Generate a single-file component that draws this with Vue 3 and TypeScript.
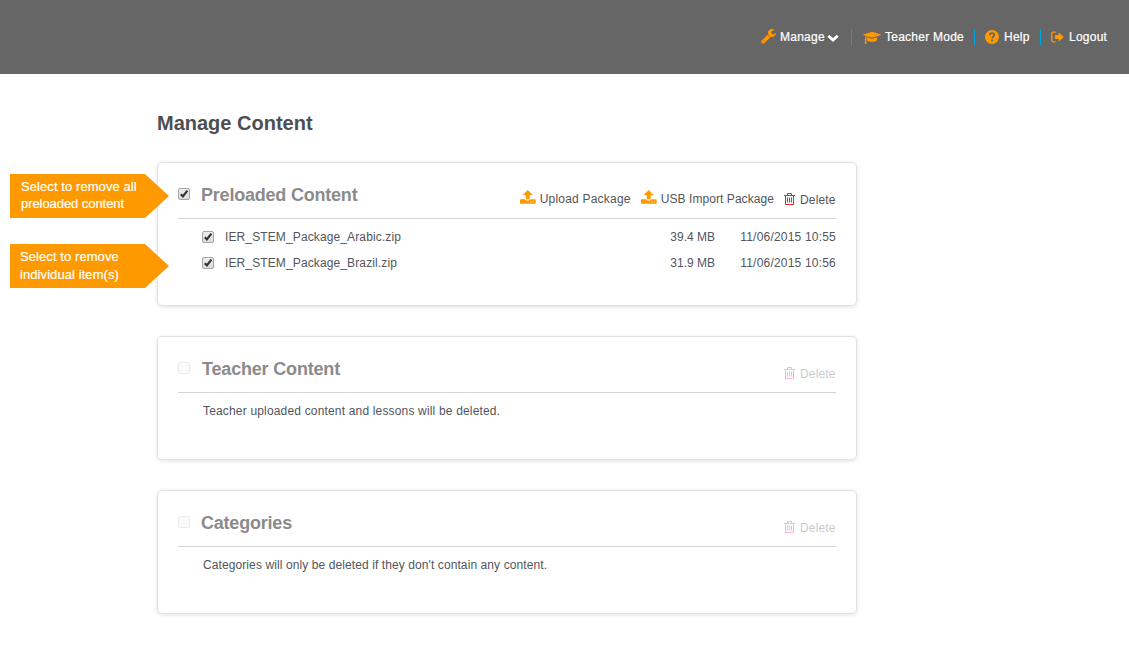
<script setup lang="ts">
interface PackageFile {
  name: string
  size: string
  date: string
}

const files: PackageFile[] = [
  { name: 'IER_STEM_Package_Arabic.zip', size: '39.4 MB', date: '11/06/2015 10:55' },
  { name: 'IER_STEM_Package_Brazil.zip', size: '31.9 MB', date: '11/06/2015 10:56' },
]

const sections = [
  { key: 'teacher-content', title: 'Teacher Content', text: 'Teacher uploaded content and lessons will be deleted.' },
  { key: 'categories', title: 'Categories', text: "Categories will only be deleted if they don't contain any content." },
]
</script>

<template>
  <div class="page">
    <header class="topbar">
      <nav class="nav">
        <a class="item manage">
          <svg class="icon wrench" viewBox="0 0 1664 1664"><path d="M384 1344q0-26-19-45t-45-19-45 19-19 45 19 45 45 19 45-19 19-45zm644-420l-682 682q-37 37-90 37-52 0-91-37L59 1498q-38-36-38-90 0-53 38-91l681-681q39 98 114.500 173.500T1028 924zm634-435q0 39-23 106-47 134-164.500 217.500T1216 896q-185 0-316.500-131.500T768 448t131.500-316.500T1216 0q58 0 121.500 16.500T1445 63q16 11 16 28t-16 28l-293 169v224l193 107q5-3 79-48.500t135.500-81T1630 454q15 0 23.500 10t8.500 25z" /></svg>
          <span>Manage</span>
          <svg class="icon chevron" viewBox="0 0 12 8"><path d="M1.300 1.700L6 6l4.700-4.300" /></svg>
        </a>
        <a class="item teacher">
          <svg class="icon cap" viewBox="0 0 2304 1600"><path d="M1774 836l18 316q4 69-82 128t-235 93.500-323 34.500-323-34.500-235-93.500-82-128l18-316 574 181q22 7 48 7t48-7zm530-324q0 23-22 31l-1120 352q-4 1-10 1t-10-1L510 690q-43 34-71 111.500T405 980q63 36 63 109 0 69-58 107l58 433q2 14-8 25-9 11-24 11H244q-15 0-24-11-10-11-8-25l58-433q-58-38-58-107 0-73 65-111 11-207 98-330L42 543q-22-8-22-31t22-31L1162 129q4-1 10-1t10 1l1100 352q22 8 22 31z" /></svg>
          <span>Teacher Mode</span>
        </a>
        <a class="item help">
          <svg class="icon question" viewBox="0 0 14 14"><circle cx="7" cy="7" r="7" /><path class="mark" d="M4.700 5.300C4.800 3.800 5.700 3.100 7.100 3.100c1.300 0 2.200.8 2.200 1.900 0 1.700-2.200 1.700-2.200 3.300" /><rect class="dot" x="6.100" y="9.400" width="2" height="1.900" /></svg>
          <span>Help</span>
        </a>
        <a class="item logout">
          <svg class="icon exit" viewBox="0 0 13 12"><path class="frame" d="M4.700 1.100H2.500Q.8 1.100.8 2.800v6.400q0 1.700 1.700 1.700h2.200" /><path d="M4 4h3.700V1.200L12.800 6l-5.100 4.800V8H4z" /></svg>
          <span>Logout</span>
        </a>
      </nav>
    </header>

    <main class="content">
      <h1>Manage Content</h1>

      <section class="card preloaded">
        <div class="card-head">
          <span class="check on"><svg viewBox="0 0 12 12"><path d="M2.800 6.300L4.900 8.400 9.400 2.600" /></svg></span>
          <h2>Preloaded Content</h2>
          <div class="actions">
            <a class="action upload"><svg class="up" viewBox="0 0 16 14"><path d="M7.700 0l5 5H9.700v4.200H5.800V5H2.700zM.5 9.300h4.300q.5 1.400 2.900 1.400t3-1.400H15q.7 0 .7.700v3q0 .7-.7.700H.7q-.7 0-.7-.7v-3q0-.7.500-.7z" /><path class="hole" d="M10.500 11.700h1M13 11.700h1" /></svg><span>Upload Package</span></a>
            <a class="action usb"><svg class="up" viewBox="0 0 16 14"><path d="M7.700 0l5 5H9.700v4.200H5.800V5H2.700zM.5 9.300h4.300q.5 1.400 2.900 1.400t3-1.400H15q.7 0 .7.700v3q0 .7-.7.700H.7q-.7 0-.7-.7v-3q0-.7.500-.7z" /><path class="hole" d="M10.500 11.700h1M13 11.700h1" /></svg><span>USB Import Package</span></a>
            <a class="action delete"><svg class="trash" viewBox="0 0 11 12"><path d="M0 2.500h11M3.500 2.500V.5h4v2M1.500 2.500v9h8v-9M3.500 4.500v5M5.500 4.500v5M7.500 4.500v5" /></svg><span>Delete</span></a>
          </div>
        </div>
        <ul class="files">
          <li v-for="file in files" :key="file.name">
            <span class="check on"><svg viewBox="0 0 12 12"><path d="M2.800 6.300L4.900 8.400 9.400 2.600" /></svg></span>
            <span class="name">{{ file.name }}</span>
            <span class="size">{{ file.size }}</span>
            <span class="date">{{ file.date }}</span>
          </li>
        </ul>
        <div class="callout all"><div class="wide">Select to remove all</div><div class="tight">preloaded content</div></div>
        <div class="callout single"><div class="wide">Select to remove</div><div class="wide">individual item(s)</div></div>
      </section>

      <section v-for="section in sections" :key="section.key" class="card" :class="section.key">
        <div class="card-head">
          <span class="check off"></span>
          <h2>{{ section.title }}</h2>
          <div class="actions">
            <a class="action delete disabled"><svg class="trash" viewBox="0 0 11 12"><path d="M0 2.500h11M3.500 2.500V.5h4v2M1.500 2.500v9h8v-9M3.500 4.500v5M5.500 4.500v5M7.500 4.500v5" /></svg><span>Delete</span></a>
          </div>
        </div>
        <p class="note">{{ section.text }}</p>
      </section>
    </main>
  </div>
</template>

<style>
body {
  background: #fff;
}
</style>

<style scoped>
.page {
  height: 659px;
  overflow: hidden;
  font-family: "Liberation Sans", Arial, sans-serif;
  font-size: 12px;
  color: #53555a;
}
* {
  box-sizing: border-box;
}
.topbar {
  height: 74px;
  background: #666;
}
.nav {
  display: flex;
  justify-content: flex-end;
  padding: 29px 21px 0 0;
}
.item {
  display: flex;
  align-items: center;
  height: 16px;
  color: #fff;
  white-space: nowrap;
  letter-spacing: 0.250px;
  -webkit-text-stroke: 0.2px #fff;
}
.item span { flex: none; }
.manage span { width: 45px; }
.teacher span { width: 79px; }
.help span { width: 26px; }
.logout span { width: 39px; }
.item + .item {
  margin-left: 10px;
  padding-left: 10px;
  border-left: 1px solid #00a4e4;
}
.item.teacher { margin-left: 12px; }
.icon {
  flex: none;
  fill: #f90;
}
.wrench { width: 15px; height: 15px; margin: -1px 4px 0 0; }
.chevron {
  width: 12px;
  height: 8px;
  margin: 1px 0 0 2px;
  fill: none;
  stroke: #fff;
  stroke-width: 2.800;
}
.cap { width: 18px; height: 14px; margin: -1px 4px 0 1px; }
.question { width: 14px; height: 14px; margin: -1px 5px 0 0; }
.mark { fill: none; stroke: #666; stroke-width: 1.800; }
.dot { fill: #666; }
.exit { width: 13px; height: 12px; margin-right: 5px; }
.frame { fill: none; stroke: #f90; stroke-width: 1.300; }

.content {
  width: 700px;
  margin-left: 157px;
  padding-top: 36px;
}
h1, h2, p, ul {
  margin: 0;
  padding: 0;
}
h1 {
  height: 52px;
  font-size: 20px;
  line-height: 26px;
  color: #4d4f53;
}
.card {
  position: relative;
  height: 124px;
  margin-bottom: 30px;
  padding: 0 20px;
  border: 1px solid #e2e2e2;
  border-radius: 5px;
  box-shadow: 0 1px 4px rgba(0, 0, 0, 0.12);
}
.preloaded { height: 144px; }
.card-head {
  display: flex;
  height: 56px;
  border-bottom: 1px solid #d3d3d3;
}
.check {
  flex: none;
  width: 12px;
  height: 12px;
  border: 1px solid #a5a5a5;
  border-radius: 2px;
  background: linear-gradient(#ededed, #dcdcdc);
}
.check svg {
  display: block;
  width: 12px;
  height: 12px;
  margin: -1px;
  fill: none;
  stroke: #333;
  stroke-width: 2.200;
}
.check.off {
  border-color: #ececec;
  background: #fafafa;
}
.card-head .check { margin-top: 25px; }
h2 {
  margin-left: 11px;
  padding-top: 20px;
  font-size: 18px;
  line-height: 24px;
  letter-spacing: -0.210px;
  color: #8b8b8b;
  white-space: nowrap;
}
.teacher-content h2 { margin-left: 12px; letter-spacing: -0.180px; }
.actions {
  display: flex;
  margin-left: auto;
  padding-top: 27px;
}
.action {
  display: flex;
  height: 18px;
  line-height: 18px;
  white-space: nowrap;
}
.action + .action { margin-left: 10px; }
.upload { letter-spacing: 0.210px; }
.usb { letter-spacing: 0.070px; }
.delete { letter-spacing: 0.170px; }
.up {
  width: 16px;
  height: 14px;
  margin-right: 4px;
  fill: #f90;
}
.hole { stroke: #fff; stroke-width: 0.800; }
.trash {
  width: 11px;
  height: 12px;
  margin: 3px 5px 0 0;
  fill: none;
  stroke: #e8222d;
}
.delete span { width: 36px; padding-top: 1px; }
.disabled { opacity: 0.300; }
.files {
  padding: 5px 0 0 24px;
  list-style: none;
}
.files li {
  display: flex;
  align-items: center;
  height: 26px;
  line-height: 18px;
}
.files .check { margin-bottom: 1px; }
.name { margin-left: 11px; letter-spacing: 0.120px; }
.size { margin-left: auto; }
.date {
  width: 121px;
  text-align: right;
  letter-spacing: 0.200px;
}
.note {
  padding: 9px 0 0 25px;
  line-height: 18px;
  letter-spacing: 0.170px;
}
.categories .note { letter-spacing: 0.095px; }
.callout {
  position: absolute;
  left: -148px;
  width: 159px;
  height: 44px;
  padding: 4px 0 0 11px;
  background: #f90;
  clip-path: polygon(0 0, 135px 0, 100% 50%, 135px 100%, 0 100%);
  color: #fff;
  font-size: 13px;
  line-height: 17px;
  -webkit-text-stroke: 0.2px #fff;
}
.wide { letter-spacing: 0.080px; }
.tight { letter-spacing: -0.060px; }
.all { top: 11px; }
.single {
  top: 81px;
  padding-left: 10px;
  line-height: 18px;
}
</style>
